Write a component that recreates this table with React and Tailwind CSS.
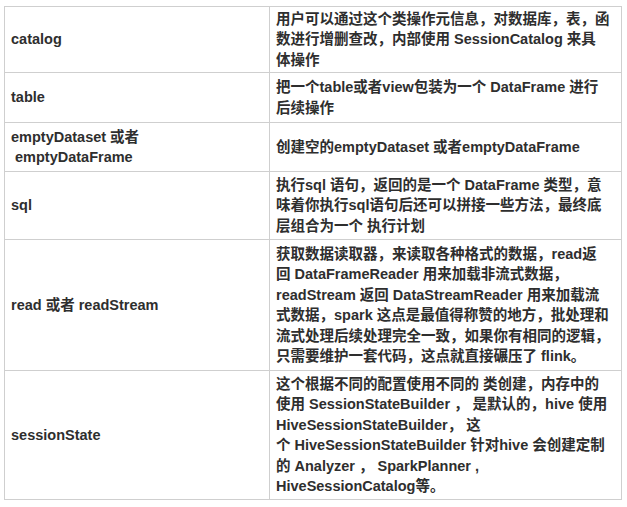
import React from "react";

const rows = [
  {
    name: ["catalog"],
    desc: [
      "用户可以通过这个类操作元信息，对数据库，表，函",
      "数进行增删查改，内部使用 SessionCatalog 来具",
      "体操作",
    ],
    h: "h-[66px]",
  },
  {
    name: ["table"],
    desc: ["把一个table或者view包装为一个 DataFrame 进行", "后续操作"],
    h: "h-[50px]",
  },
  {
    name: ["emptyDataset 或者", "\u00a0emptyDataFrame"],
    desc: ["创建空的emptyDataset 或者emptyDataFrame"],
    h: "h-[49px]",
  },
  {
    name: ["sql"],
    desc: [
      "执行sql 语句，返回的是一个 DataFrame 类型，意",
      "味着你执行sql语句后还可以拼接一些方法，最终底",
      "层组合为一个 执行计划",
    ],
    h: "h-[68px]",
  },
  {
    name: ["read 或者 readStream"],
    desc: [
      "获取数据读取器，来读取各种格式的数据，read返",
      "回 DataFrameReader 用来加载非流式数据，",
      "readStream 返回 DataStreamReader 用来加载流",
      "式数据，spark 这点是最值得称赞的地方，批处理和",
      "流式处理后续处理完全一致，如果你有相同的逻辑，",
      "只需要维护一套代码，这点就直接碾压了 flink。",
    ],
    h: "h-[131px]",
  },
  {
    name: ["sessionState"],
    desc: [
      "这个根据不同的配置使用不同的 类创建，内存中的",
      "使用 SessionStateBuilder ， 是默认的，hive 使用",
      "HiveSessionStateBuilder， 这",
      "个 HiveSessionStateBuilder 针对hive 会创建定制",
      "的 Analyzer ， SparkPlanner ,",
      "HiveSessionCatalog等。",
    ],
    h: "h-[129px]",
  },
];

const Lines = ({ lines }) =>
  lines.map((l, i) => (
    <div key={i} className="whitespace-pre">
      {l}
    </div>
  ));

export default function App() {
  return (
    <div
      className="w-[627px] h-[507px] bg-white pt-[6px] pl-[4px]"
      style={{ fontFamily: '"Liberation Sans", "Noto Sans CJK SC", sans-serif' }}
    >
      <table className="border-collapse w-[617px] table-fixed text-[14.5px] leading-[20.5px] font-semibold text-[#2e2e2e]">
        <colgroup>
          <col className="w-[265px]" />
          <col className="w-[352px]" />
        </colgroup>
        <tbody>
          {rows.map((r, i) => (
            <tr key={i} className={r.h}>
              <td className="border border-[#cfcfcf] px-[6px] py-0 align-middle">
                <Lines lines={r.name} />
              </td>
              <td className="border border-[#cfcfcf] px-[6px] py-0 align-middle">
                <Lines lines={r.desc} />
              </td>
            </tr>
          ))}
        </tbody>
      </table>
    </div>
  );
}
